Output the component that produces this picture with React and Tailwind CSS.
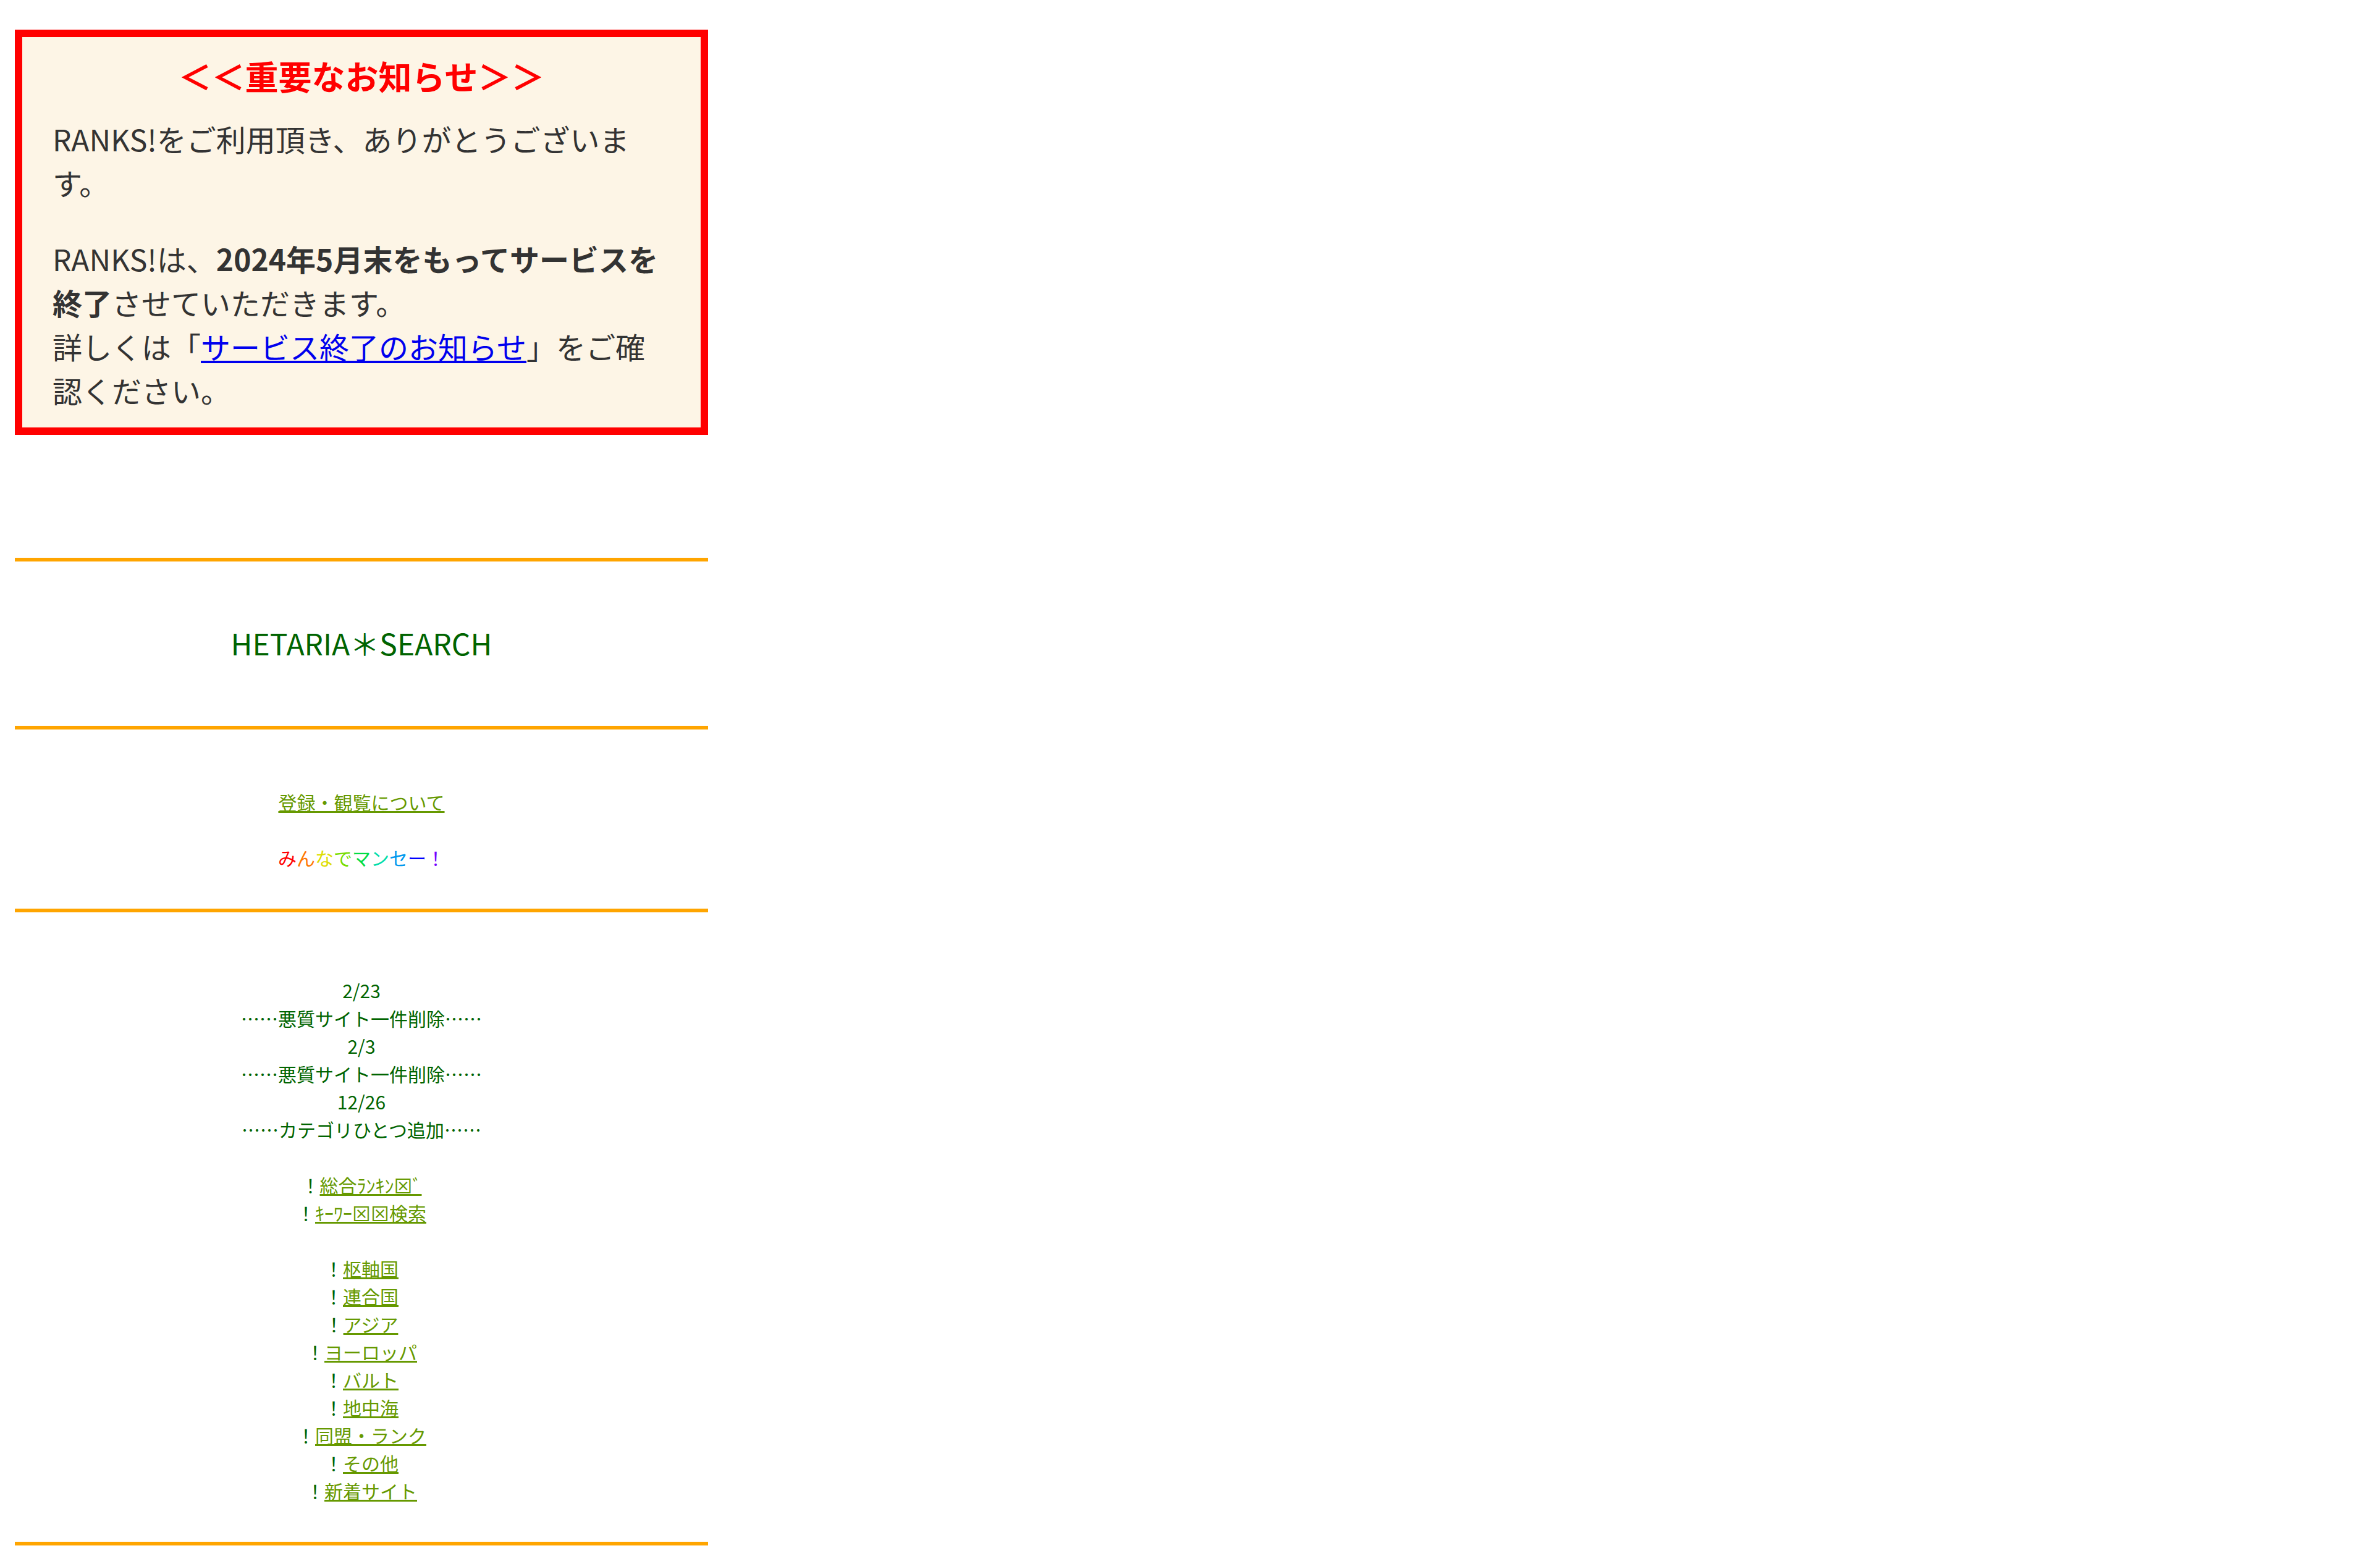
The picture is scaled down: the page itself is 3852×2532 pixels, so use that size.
import React from 'react';

const rainbow = [
  ['み', 'text-[#ff0000]'],
  ['ん', 'text-[#ff7700]'],
  ['な', 'text-[#dddd00]'],
  ['で', 'text-[#77dd00]'],
  ['マ', 'text-[#00dd44]'],
  ['ン', 'text-[#00ddaa]'],
  ['セ', 'text-[#0099ee]'],
  ['ー', 'text-[#0000ff]'],
  ['！', 'text-[#7700ff]'],
];

const news = [
  '2/23',
  '……悪質サイト一件削除……',
  '2/3',
  '……悪質サイト一件削除……',
  '12/26',
  '……カテゴリひとつ追加……',
];

const categories = ['枢軸国', '連合国', 'アジア', 'ヨーロッパ', 'バルト', '地中海', '同盟・ランク', 'その他', '新着サイト'];

const Rule = () => <div className="h-[6px] bg-[#ffa500]" />;

const NavLink = ({ children }) => (
  <div>
    ！<a href="#" className="text-[#669900] underline">{children}</a>
  </div>
);

export default function App() {
  return (
    <div className="min-h-screen bg-white font-['Noto_Sans_CJK_JP','Noto_Sans',sans-serif]">
      <div className="ml-[24px] w-[1122px] pt-[48px]">
        {/* notice box */}
        <div className="border-[12px] border-[#ff0000] bg-[#fdf5e6] px-[49px] pt-[27px] pb-[25px] text-[48px] leading-[71px] text-[#333333]">
          <p className="text-center text-[54px] leading-[72px] font-bold text-[#ff0000]">＜＜重要なお知らせ＞＞</p>
          <p className="mt-[30px]">RANKS!をご利用頂き、ありがとうございます。</p>
          <p className="mt-[52px]">
            RANKS!は、<b>2024年5月末をもってサービスを終了</b>させていただきます。
            <br />
            詳しくは「<a href="#" className="text-[#0000ee] underline">サービス終了のお知らせ</a>」をご確認ください。
          </p>
        </div>

        <div className="mt-[199px]">
          <Rule />
          <div className="pt-[101px] pb-[105px] text-center text-[48px] leading-[60px] text-[#006400]">HETARIA＊SEARCH</div>
          <Rule />

          <div className="pt-[95px] pb-[60px] text-center text-[30px] leading-[45px]">
            <a href="#" className="text-[#669900] underline">登録・観覧について</a>
            <br />
            <br />
            <span>
              {rainbow.map(([ch, cls], i) => (
                <span key={i} className={cls}>{ch}</span>
              ))}
            </span>
          </div>
          <Rule />

          <div className="pt-[104px] pb-[60px] text-center text-[30px] leading-[45px] text-[#006400]">
            {news.map((line, i) => (
              <div key={i}>{line}</div>
            ))}
            <div className="h-[45px]" />
            <NavLink>総合ﾗﾝｷﾝ⊠ﾞ</NavLink>
            <NavLink>ｷｰﾜｰ⊠⊠検索</NavLink>
            <div className="h-[45px]" />
            {categories.map((c) => (
              <NavLink key={c}>{c}</NavLink>
            ))}
          </div>
          <Rule />
        </div>
      </div>
    </div>
  );
}
